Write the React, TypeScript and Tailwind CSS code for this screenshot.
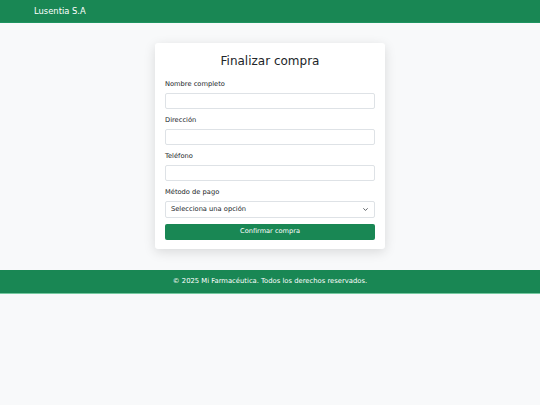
import React from 'react';

const fields = ['Nombre completo', 'Dirección', 'Teléfono'];

export default function App() {
  return (
    <div className="min-h-screen bg-[#f8f9fa] font-['DejaVu_Sans',sans-serif] text-[#212529]">
      <nav className="h-[23px] bg-[#198754] flex items-center px-[34px] border-b border-[#1e9460]">
        <span className="text-white text-[8.4px]">Lusentia S.A</span>
      </nav>

      <div className="pt-[20px] pb-[21px]">
        <div className="mx-auto w-[230px] bg-white rounded-[3px] shadow-[0_3px_12px_rgba(0,0,0,0.13)] px-[10px] pt-[9px] pb-[9px]">
          <h2 className="text-center text-[12px] leading-[18px] mb-[9px]">Finalizar compra</h2>
          {fields.map((f) => (
            <div key={f} className="mb-[6px]">
              <label className="block text-[6.7px] leading-[10px] mb-[4px]">{f}</label>
              <input className="block w-full h-[16px] border border-[#dee2e6] rounded-[2px] bg-white" />
            </div>
          ))}
          <div className="mb-[6px]">
            <label className="block text-[6.7px] leading-[10px] mb-[4px]">Método de pago</label>
            <div className="flex items-center justify-between h-[17px] border border-[#dee2e6] rounded-[2px] pl-[5px] pr-[6px]">
              <span className="text-[6.7px] text-[#212529]">Selecciona una opción</span>
              <svg width="5" height="5" viewBox="0 0 16 16">
                <path d="M2 5l6 6 6-6" fill="none" stroke="#343a40" strokeWidth="2.5" strokeLinecap="round" strokeLinejoin="round" />
              </svg>
            </div>
          </div>
          <button className="w-full h-[16px] bg-[#198754] text-white text-[6.6px] rounded-[2px] flex items-center justify-center">
            Confirmar compra
          </button>
        </div>
      </div>

      <footer className="h-[24px] bg-[#198754] border-b border-[#75c9a0] flex items-center justify-center">
        <span className="text-white text-[6.8px]">© 2025 Mi Farmacéutica. Todos los derechos reservados.</span>
      </footer>
    </div>
  );
}
